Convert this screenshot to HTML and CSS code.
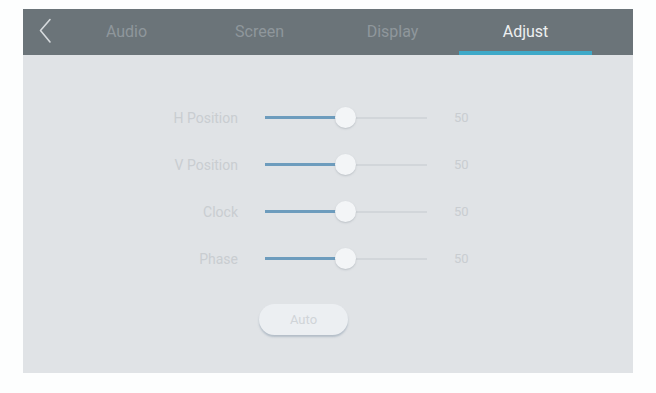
FILE: index.html
```html
<!DOCTYPE html>
<html>
<head>
<meta charset="utf-8">
<link rel="stylesheet" href="styles.css">
</head>
<body>
<div class="panel">
  <div class="header">
    <div class="back">
      <svg width="14" height="26" viewBox="0 0 14 26"><path d="M12 1.5 L2.5 12.5 L12 24" fill="none" stroke="#d6dadd" stroke-width="1.6" stroke-linecap="round" stroke-linejoin="round"/></svg>
    </div>
    <div class="tabs">
      <div class="tab">Audio</div>
      <div class="tab">Screen</div>
      <div class="tab">Display</div>
      <div class="tab active">Adjust</div>
    </div>
  </div>
  <div class="content">
    <div class="row">
      <div class="label">H Position</div>
      <div class="slider"><div class="fill"></div><div class="thumb"></div></div>
      <div class="value">50</div>
    </div>
    <div class="row">
      <div class="label">V Position</div>
      <div class="slider"><div class="fill"></div><div class="thumb"></div></div>
      <div class="value">50</div>
    </div>
    <div class="row">
      <div class="label">Clock</div>
      <div class="slider"><div class="fill"></div><div class="thumb"></div></div>
      <div class="value">50</div>
    </div>
    <div class="row">
      <div class="label">Phase</div>
      <div class="slider"><div class="fill"></div><div class="thumb"></div></div>
      <div class="value">50</div>
    </div>
    <div class="btnrow"><div class="auto">Auto</div></div>
  </div>
</div>
</body>
</html>
```
FILE: styles.css
```css
html, body { margin: 0; padding: 0; background: #fdfefe; }
body { font-family: Roboto, "Liberation Sans", sans-serif; }
.panel {
  margin: 9px 0 0 23px;
  width: 610px;
  height: 364px;
  background: #e0e3e6;
  display: flex;
  flex-direction: column;
}
.header {
  height: 46px;
  background: #6b7479;
  display: flex;
  align-items: stretch;
}
.back {
  width: 37px;
  display: flex;
  align-items: center;
  padding-left: 15px;
  padding-bottom: 2px;
  box-sizing: border-box;
}
.tabs { display: flex; }
.tab {
  width: 133px;
  display: flex;
  align-items: center;
  justify-content: center;
  color: #8f979c;
  font-size: 16px;
  box-sizing: border-box;
  padding-bottom: 1px;
}
.tab.active {
  color: #eef0f1;
  border-bottom: 4px solid #3fa9c8;
  padding-top: 4px;
}
.content {
  padding-top: 39px;
  display: flex;
  flex-direction: column;
}
.row {
  height: 47px;
  display: flex;
  align-items: center;
}
.label {
  width: 215px;
  text-align: right;
  color: #c9cdd1;
  font-size: 14px;
}
.slider {
  margin-left: 27px;
  width: 162px;
  height: 2px;
  background: #d2d6da;
  position: relative;
}
.fill {
  width: 80px;
  height: 3px;
  margin-top: -0.5px;
  background: #6d9cbd;
}
.thumb {
  position: absolute;
  left: 70px;
  top: -10px;
  width: 21px;
  height: 21px;
  border-radius: 50%;
  background: #f3f5f7;
  box-shadow: 0 1px 2px rgba(120,130,140,0.35);
}
.value {
  margin-left: 27px;
  color: #c9cdd1;
  font-size: 13px;
}
.btnrow { padding-top: 22px; padding-left: 236px; }
.auto {
  width: 89px;
  height: 31px;
  border-radius: 16px;
  background: #eceff2;
  box-shadow: 0 2px 2px rgba(150,165,180,0.6);
  color: #d0d4d8;
  font-size: 13px;
  display: flex;
  align-items: center;
  justify-content: center;
}
```
